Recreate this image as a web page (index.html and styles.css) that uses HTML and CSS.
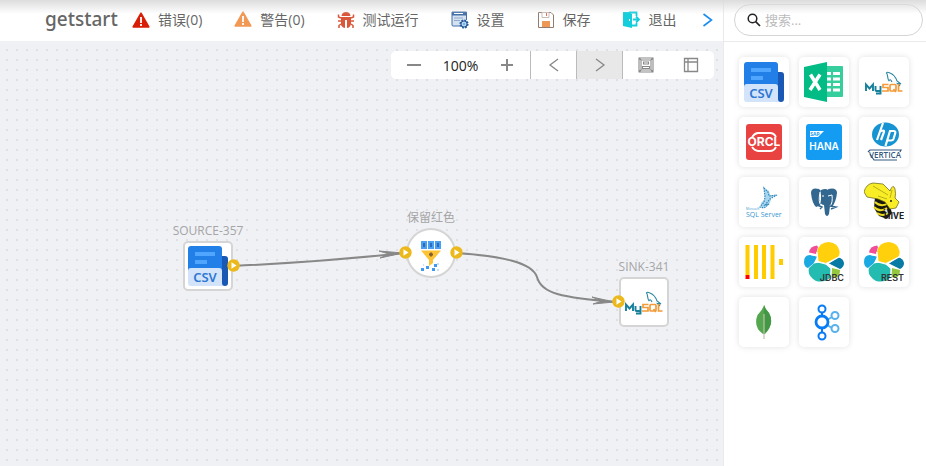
FILE: index.html
```html
<!DOCTYPE html>
<html lang="zh-CN">
<head>
<meta charset="utf-8">
<title>getstart</title>
<link rel="stylesheet" href="styles.css">
</head>
<body>
<svg class="defs" aria-hidden="true">
  <symbol id="csv" viewBox="0 0 40 40">
    <rect x="26" y="10" width="14" height="30" rx="3" fill="#1959b5"/>
    <path d="M3 0h28a3 3 0 0 1 3 3v29H0V3a3 3 0 0 1 3-3z" fill="#237fe8"/>
    <path d="M7 6h20v4H7zM7 14h12v4H7z" fill="#50a5ff"/>
    <path d="M0 25q0-3 3-3h28q3 0 3 3v12q0 3 3 3H3q-3 0-3-3z" fill="#d3e4fa"/>
  </symbol>
  <symbol id="mysql" viewBox="0 0 40 40">
    <path d="M25 19C23 16 24 12 22.500 11Q23 9.500 26 11Q31 13 33 19L37 22L33.500 21.500L36 24M25 19Q26 16 28 20" fill="none" stroke="#2c87a0" stroke-width="1.100"/>
    <path d="M2 29v-6.500l3.500 4L9 22.500V29M11.500 24v4q0 1 1 1H16M16.500 24v7.500H12" fill="none" stroke="#17809b" stroke-width="1.900"/>
    <path d="M24.500 22.500h-5.500v3h5V29H18M27 22.500h4q1 0 1 1V28q0 1-1 1h-4q-1 0-1-1v-4.500q0-1 1-1zM29.500 27l2.500 3M34.500 22v7h4" fill="none" stroke="#f29b38" stroke-width="1.700"/>
  </symbol>
  <symbol id="elastic" viewBox="0 0 40 40">
    <path d="M14 19L13 10Q15 0 25 0Q34 1 35.500 9Q36 13 34 15L22 21z" fill="#ffd00b"/>
    <path d="M12 12L5 10.500Q6 4 13 3.500L14 5z" fill="#f04e98"/>
    <path d="M0 20Q0 13 6 13L13 14.500L10 21L4 26Q0 25 0 20z" fill="#1ba9e1"/>
    <path d="M34 15.500Q39 16 40 21Q40 25 36 27L25 21.500z" fill="#077ba4"/>
    <path d="M11 20.500L21 21L27 27L26 36Q20 41 12 39Q3 34 5 26z" fill="#24bbb1"/>
    <path d="M28 26l8 2q0 6-4 8l-5-1z" fill="#93c83e"/>
    <path d="M13 10l1 10-4 1M14 20l8 2 13-7M22 22l5 4v9M4 12l9 2" fill="none" stroke="#fff" stroke-width="1.200"/>
  </symbol>
  <symbol id="port" viewBox="0 0 13 13">
    <circle cx="6.500" cy="6.500" r="6.200" fill="#ecb91c"/>
    <path d="M4.500 3.200v6.600l5-3.300z" fill="#fff"/>
  </symbol>
  <symbol id="warn" viewBox="0 0 18 16">
    <path d="M9 1.200L16.800 15H1.200z" fill="currentColor" stroke="currentColor" stroke-width="1.600" stroke-linejoin="round"/>
    <path d="M9 5v6M9 12v2" stroke="#fff" stroke-width="1.800"/>
  </symbol>
</svg>

<div class="app">
  <main class="editor">
    <header class="toolbar">
      <h1 class="title">getstart</h1>
      <nav class="actions">
        <button class="action" type="button"><svg class="icon error" viewBox="0 0 18 18"><use href="#warn" y="1" width="18" height="16"/></svg>错误(0)</button>
        <button class="action" type="button"><svg class="icon warning" viewBox="0 0 18 18"><use href="#warn" width="18" height="16"/></svg>警告(0)</button>
        <button class="action" type="button"><svg class="icon" viewBox="0 0 18 18">
          <path d="M4.500 5Q5 1 9 1t4.500 4z" fill="#d9583b"/>
          <path d="M4 6h10v7q-1 4-4 4V9H8v8q-4-1-4-4z" fill="#d9583b"/>
          <path d="M4 7L1.500 6V3.500M14 7l2.500-1V3.500M4 10H1M14 10h3M4 13l-2 1.500V17M14 13l2 1.500V17" fill="none" stroke="#d9583b" stroke-width="1.500"/>
        </svg>测试运行</button>
        <button class="action" type="button"><svg class="icon" viewBox="0 0 18 18">
          <path d="M1 1h14.500v14H1z" fill="#d4e1f1"/>
          <path d="M9 15H2q-1 0-1-1V1h14.500v8" fill="none" stroke="#456fa9"/>
          <path d="M1 1h14.500v3.500H1z" fill="#456fa9"/><path d="M3 2.500h9" stroke="#fff"/>
          <path d="M3 7h9M3 9.500h6" stroke="#91a9c9" />
          <circle cx="13" cy="13" r="3.600" fill="#245b9d" stroke="#245b9d" stroke-width="2" stroke-dasharray="1.700 1.100"/>
          <circle cx="13" cy="13" r="2" fill="#75b4e7" stroke="#fff" stroke-width=".8"/>
        </svg>设置</button>
        <button class="action" type="button"><svg class="icon" viewBox="0 0 18 18">
          <path d="M1.500 1.500h12.500L16.500 4v12.500h-15z" fill="#fff" stroke="#927b71"/>
          <path d="M5 1.500v5h7v-5" fill="#fff" stroke="#c7bdb6"/><path d="M9.500 2v3" stroke="#e66c50"/>
          <path d="M5 10h8v6H5z" fill="#ed9854"/>
        </svg>保存</button>
        <button class="action" type="button"><svg class="icon" viewBox="0 0 18 18">
          <path d="M0 1h6l3 2v14l-9-2z" fill="#15cedb"/><path d="M6 1.500h7.500V5M8 14.500h5.500V12M10 8.500h6M13 5.500l3 3-3 3" fill="none" stroke="#15cedb" stroke-width="1.800"/><path d="M6.500 8v2" stroke="#fff"/>
        </svg>退出</button>
      </nav>
      <button class="more" type="button" aria-label="更多"><svg viewBox="0 0 12 14"><path d="M1.500 1l8 6-8 6" fill="none" stroke="#1b8cf2" stroke-width="1.600"/></svg></button>
    </header>

    <section class="canvas">
      <div class="controls">
        <div class="zoom">
          <button type="button" aria-label="缩小"><svg viewBox="0 0 16 16"><path d="M1 8h14" stroke="#888" stroke-width="2"/></svg></button>
          <output>100%</output>
          <button type="button" aria-label="放大"><svg viewBox="0 0 16 16"><path d="M2 8h12M8 2v12" stroke="#888" stroke-width="2"/></svg></button>
        </div>
        <button class="control divided" type="button" aria-label="撤销"><svg viewBox="0 0 16 16"><path d="M12 2L4 8l8 6" fill="none" stroke="#888" stroke-width="1.300"/></svg></button>
        <button class="control divided active" type="button" aria-label="重做"><svg viewBox="0 0 16 16"><path d="M4 2l8 6-8 6" fill="none" stroke="#888" stroke-width="1.300"/></svg></button>
        <button class="control divided" type="button" aria-label="适应画布"><svg viewBox="0 0 16 16"><path d="M1 1h14v14H1zM3 3h10v10H3zM1 1l2 2M15 1l-2 2M1 15l2-2M15 15l-2-2M5.500 5h5v2h-5zM4.500 9.500h7v2h-7z" fill="none" stroke="#888" stroke-width="1.100"/></svg></button>
        <button class="control" type="button" aria-label="布局"><svg viewBox="0 0 16 16"><path d="M1.500 1.500h13v13h-13zM1.500 5h13M5 1.500v13" fill="none" stroke="#888" stroke-width="1.300"/></svg></button>
      </div>
      <svg class="edges" aria-hidden="true">
        <path d="M233 225Q320 221 405 212M456 212C500 215 532 221 537 236C541 252 560 257 619 261"/>
        <path class="arrow" d="M379 210l24 2-23 5 9-4zM592 256l22 5-21 2 9-3z"/>
      </svg>
      <div class="node source"><span>SOURCE-357</span><div class="shape"><svg viewBox="0 0 40 40"><use href="#csv"/><text x="17" y="36" class="csv-text">CSV</text></svg></div><svg class="port out"><use href="#port"/></svg></div>
      <div class="node filter"><span>保留红色</span><div class="shape round"><svg viewBox="0 0 40 40">
        <path d="M10 8h6v8h-6zM17 8h6v8h-6zM24 8h6v8h-6z" fill="#4c9eee"/><path d="M12 10h2v4h-2zM19 10h2v4h-2zM26 10h2v4h-2z" fill="#286ebd"/>
        <path d="M10 17.500h20L22 27v3l-4 3v-6z" fill="#fbc335"/><path d="M18 21.500h4M20 19.500v4" stroke="#805d30" stroke-width="1.800"/>
        <path d="M23 31h3v3h-3zM15 33h3v3h-3zM10 35h3v3h-3zM21 35h3v3h-3z" fill="#4198ef"/><path d="M26 31h2M26 37h2M12 32h1" stroke="#8fc3f5"/>
      </svg></div><svg class="port in"><use href="#port"/></svg><svg class="port out"><use href="#port"/></svg></div>
      <div class="node sink"><span>SINK-341</span><div class="shape"><svg><use href="#mysql"/></svg></div><svg class="port in"><use href="#port"/></svg></div>
    </section>
  </main>

  <aside class="sidebar">
    <div class="search-row"><label class="search"><svg viewBox="0 0 14 14" aria-hidden="true"><circle cx="5.500" cy="5.500" r="4.300" fill="none" stroke="#222" stroke-width="1.500"/><path d="M8.700 8.700L13 13" stroke="#222" stroke-width="1.700"/></svg><input type="search" placeholder="搜索..." aria-label="搜索"></label></div>
    <div class="palette">
      <button type="button" aria-label="CSV"><svg viewBox="0 0 40 40"><use href="#csv"/><text x="17" y="36" class="csv-text">CSV</text></svg></button>
      <button type="button" aria-label="Excel"><svg viewBox="0 0 40 40">
        <path d="M21 4h17q1 0 1 1v29q0 1-1 1H21z" fill="#36ce9d"/><path d="M0 5L23 0v40L0 35z" fill="#03bb85"/>
        <path d="M23 10h4v3h-4zM29 10h7v3h-7zM23 15.500h4v3h-4zM29 15.500h7v3h-7zM23 21h4v3h-4zM29 21h7v3h-7zM23 26.500h4v3h-4zM29 26.500h7v3h-7z" fill="#fff"/>
        <path d="M6.500 12.500L16 28M16 12.500L6 28" stroke="#fff" stroke-width="3.500"/>
      </svg></button>
      <button type="button" aria-label="MySQL"><svg><use href="#mysql"/></svg></button>
      <button type="button" aria-label="Oracle"><svg viewBox="0 0 40 40">
        <rect x="2" y="2" width="36" height="36" rx="3" fill="#e84341"/>
        <path d="M8 15q3-4 6-4h12q4 0 6 4M8 25q3 4 6 4h12q4 0 6-4" fill="none" stroke="#fff" stroke-width="1.800"/><text x="20" y="24" class="orcl-text">ORCL</text>
      </svg></button>
      <button type="button" aria-label="SAP HANA"><svg viewBox="0 0 40 40">
        <rect x="2" y="2" width="36" height="36" rx="3" fill="#149cf3"/><path d="M6 9h14l-6 6H6z" fill="#fff"/><text x="11" y="14" class="sap-text">SAP</text><text x="20" y="28" class="hana-text">HANA</text>
      </svg></button>
      <button type="button" aria-label="HP Vertica"><svg viewBox="0 0 40 40">
        <ellipse cx="21.500" cy="12.500" rx="13.500" ry="12" fill="#1593d2"/><path d="M19 1L13 18M15.500 10q5-3 4.500 0L17 18M21.500 24L26 9h4q2 0 1 3l-1.500 5q-.5 1.500-2.500 1.500h-3" fill="none" stroke="#fff" stroke-width="2.200"/>
        <path d="M4 30l2-2h31l-1 2M6 32l4 6h23" fill="none" stroke="#35597e" stroke-width="1.200"/><text x="21" y="36" class="vertica-text">VERTICA</text>
      </svg></button>
      <button type="button" aria-label="SQL Server"><svg viewBox="0 0 40 40">
        <path d="M20 6l5 3 1 4 6 0-5 3q0 6-5 9l-6 1 1-5 4-4z" fill="#a9d5ed"/><path d="M20 6l4 4 1 4 8-1-7 4-5 6 4-1-5 4-4-1 4-5 1-5z" fill="none" stroke="#3289bd" stroke-width="1.200" stroke-dasharray="1.500 1"/>
        <text x="2" y="28" class="ms-text">Microsoft</text><text x="2" y="35" class="sql-text">SQL Server</text>
      </svg></button>
      <button type="button" aria-label="PostgreSQL"><svg viewBox="0 0 40 40">
        <path d="M15 7Q7 5 7 11q1 10 5 14l5-2V9zM17 8q7-3 9 3v13l-1 8q-2 4-4 0l-1-9q-5 0-4-10zM24 7q9-2 9 4-1 9-5 14l-3-2q2-8-1-16z" fill="#326790"/>
        <path d="M16 10q-2 11 1 13l3 1M18 14h2M24 14l4-1q1 8-2 11" fill="none" stroke="#fff" stroke-width="1"/><path d="M13 23l5 2-2 2M26 24l6 1-5 2" fill="none" stroke="#326790" stroke-width="1.400"/>
      </svg></button>
      <button type="button" aria-label="Hive"><svg viewBox="0 0 40 40">
        <path d="M11 15L24 18L28 31L23 37L15 34L10 26Z" fill="#181a10"/><path d="M11 20q6 6 14 1M10 25q6 6 13 1M13 31q6 4 11 0" fill="none" stroke="#eadb22" stroke-width="2"/>
        <path d="M0 10Q2 2 9 1L19 2L26 9Q29 1 31 7Q32 12 31 16L35 20L32 26L26 27L21 20L14 17L3 15Z" fill="#f9ed25" stroke="#625d15" stroke-width=".7"/><path d="M9 4l15 9M14 14l9 3M28 8l-2 8" stroke="#aaa016" fill="none" stroke-width=".8"/><path d="M26 19h2M20 27l4 4" stroke="#222" stroke-width="1.400"/><path d="M20 28l3-1 1 5" fill="#ddd"/>
        <text x="40" y="37" class="hive-text">HIVE</text>
      </svg></button>
      <button type="button" aria-label="ClickHouse"><svg viewBox="0 0 40 40"><path d="M1.500 3h4v30h-4zM10 3h4v34h-4zM18 3h4v34h-4zM26.500 3h4v34h-4zM35 17h4v6h-4z" fill="#fc0"/><path d="M1.500 33h4v4h-4z" fill="#f00"/></svg></button>
      <button type="button" aria-label="Elasticsearch JDBC"><svg viewBox="0 0 40 40"><use href="#elastic"/><text x="40" y="39" class="elastic-text">JDBC</text></svg></button>
      <button type="button" aria-label="Elasticsearch REST"><svg viewBox="0 0 40 40"><use href="#elastic"/><text x="40" y="39" class="elastic-text">REST</text></svg></button>
      <button type="button" aria-label="MongoDB"><svg viewBox="0 0 40 40"><path d="M20 3q1 4 5 8 6 11-4 21h-2Q9 25 13.500 13 19 7 20 3z" fill="#55a74f"/><path d="M20 3q1 4 5 8 6 11-5 21z" fill="#439846"/><path d="M20 12v25" stroke="#c2bfac" stroke-width="1.200"/></svg></button>
      <button type="button" aria-label="Kafka"><svg viewBox="0 0 40 40"><g fill="none" stroke="#58b1ed" stroke-width="2"><path d="M23 18l5-3M23 23l5 3"/><circle cx="31" cy="13.500" r="3.500"/><circle cx="31" cy="26.500" r="3.500"/></g><g fill="none" stroke="#087cf7" stroke-width="2"><path d="M18 11v4M18 26v4"/><circle cx="18" cy="7" r="3.500"/><circle cx="18" cy="34" r="3.500"/><circle cx="18" cy="20" r="6" stroke-width="2.800"/></g></svg></button>
    </div>
  </aside>
</div>
</body>
</html>
```
FILE: styles.css
```css
* { box-sizing: border-box; }
body { margin: 0; font-family: "Open Sans", "Noto Sans CJK SC", sans-serif; color: #666; background: #fff; }
button { font: inherit; color: inherit; background: none; border: 0; padding: 0; cursor: pointer; }
svg { display: block; flex: none; }
.defs { display: none; }
.app { position: relative; display: grid; grid-template-columns: 1fr 203px; min-height: 100vh; }
.app::before { content: ""; position: absolute; inset: 0 0 auto; height: 14px; background: linear-gradient(#dcdcdc, rgb(255 255 255 / 0)); pointer-events: none; }
.editor { display: flex; flex-direction: column; min-width: 0; }
.toolbar { height: 41px; display: flex; align-items: center; padding: 0 9px 2px 45px; white-space: nowrap; }
.title { margin: 0; width: 87px; font: 600 19px/24px "Noto Sans", sans-serif; font-weight: 500; padding-bottom: 2px; }
.actions { display: flex; gap: 32px; }
.action { display: flex; align-items: center; gap: 8px; font-size: 14px; line-height: 20px; }
.icon { width: 18px; height: 18px; }
.error { color: #d81e06; }
.warning { color: #f29855; }
.more { margin-left: auto; }
.more svg { width: 12px; height: 14px; }
.canvas { position: relative; flex: 1; background: #f0f1f5 conic-gradient(from 270deg at 2px 2px, #dfe0e4 90deg, transparent 0) 6px 8px / 10px 10px; }
.controls { position: absolute; top: 10px; right: 9px; display: flex; height: 28px; border-radius: 5px; background: #fff; overflow: hidden; }
.zoom { width: 139px; display: flex; align-items: center; justify-content: space-between; padding: 0 15px; font-size: 14px; color: #222; }
.controls svg { width: 16px; height: 16px; }
.control { width: 46px; display: grid; place-items: center; }
.divided { border-left: 1px solid #bbb; }
.active { background: #e8e8e8; }
.edges { position: absolute; inset: 0; width: 100%; height: 100%; fill: none; stroke: #888; stroke-width: 2; }
.edges .arrow { fill: #888; stroke-width: 1; }
.node { position: absolute; width: 50px; height: 50px; }
.source { left: 183px; top: 200px; }
.filter { left: 406px; top: 187px; }
.sink { left: 619px; top: 236px; }
.node span { position: absolute; left: 50%; bottom: 51px; transform: translateX(-50%); font-size: 12px; line-height: 18px; color: #a5a5a5; white-space: nowrap; }
.shape { width: 50px; height: 50px; display: grid; place-items: center; background: #fff; border: 2px solid #d5d5d5; border-radius: 5px; }
.round { border-radius: 50%; }
.shape svg, .palette svg { width: 40px; height: 40px; }
.port { position: absolute; top: 18px; width: 13px; height: 13px; }
.in { left: -7px; }
.out { right: -7px; }
.sidebar { border-left: 1px solid #eaeaea; }
.search-row { height: 42px; padding: 4px 3px 0 10px; border-bottom: 1px solid #eaeaea; }
.search { height: 32px; display: flex; align-items: center; gap: 4px; padding: 0 12px; border: 1px solid #d5d5d5; border-radius: 16px; }
.search svg { width: 14px; height: 14px; }
.search input { width: 100%; min-width: 0; border: 0; padding: 0; outline: 0; background: none; font: inherit; font-size: 13px; color: #555; }
.search input::placeholder { color: #bbb; }
.palette { display: grid; grid-template-columns: repeat(auto-fill, 50px); gap: 10px; padding: 15px; }
.palette button { height: 50px; display: grid; place-items: center; border-radius: 5px; background: #fff; box-shadow: 0 0 6px rgb(0 0 0 / 12%); }
text { font-family: "Open Sans", sans-serif; font-weight: 700; text-anchor: middle; stroke: none; }
.csv-text { font-size: 13px; font-family: "Noto Sans", sans-serif; font-weight: 600; fill: #2c77d2; }
.orcl-text { font-size: 12px; font-family: Inter, sans-serif; fill: #fff; }
.sap-text { font-size: 5px; fill: #149cf3; }
.hana-text { font-size: 10px; font-family: Inter, sans-serif; font-weight: 600; fill: #fff; }
.vertica-text { font-size: 8px; font-weight: 600; fill: #35597e; }
.ms-text, .sql-text { font-size: 3px; font-weight: 400; text-anchor: start; fill: #3696d0; }
.sql-text { font-size: 7px; }
.hive-text { font-size: 9px; font-family: Roboto, sans-serif; text-anchor: end; fill: #222; }
.elastic-text { font-size: 9px; font-family: Inter, sans-serif; font-weight: 600; text-anchor: end; fill: #333; }
```
